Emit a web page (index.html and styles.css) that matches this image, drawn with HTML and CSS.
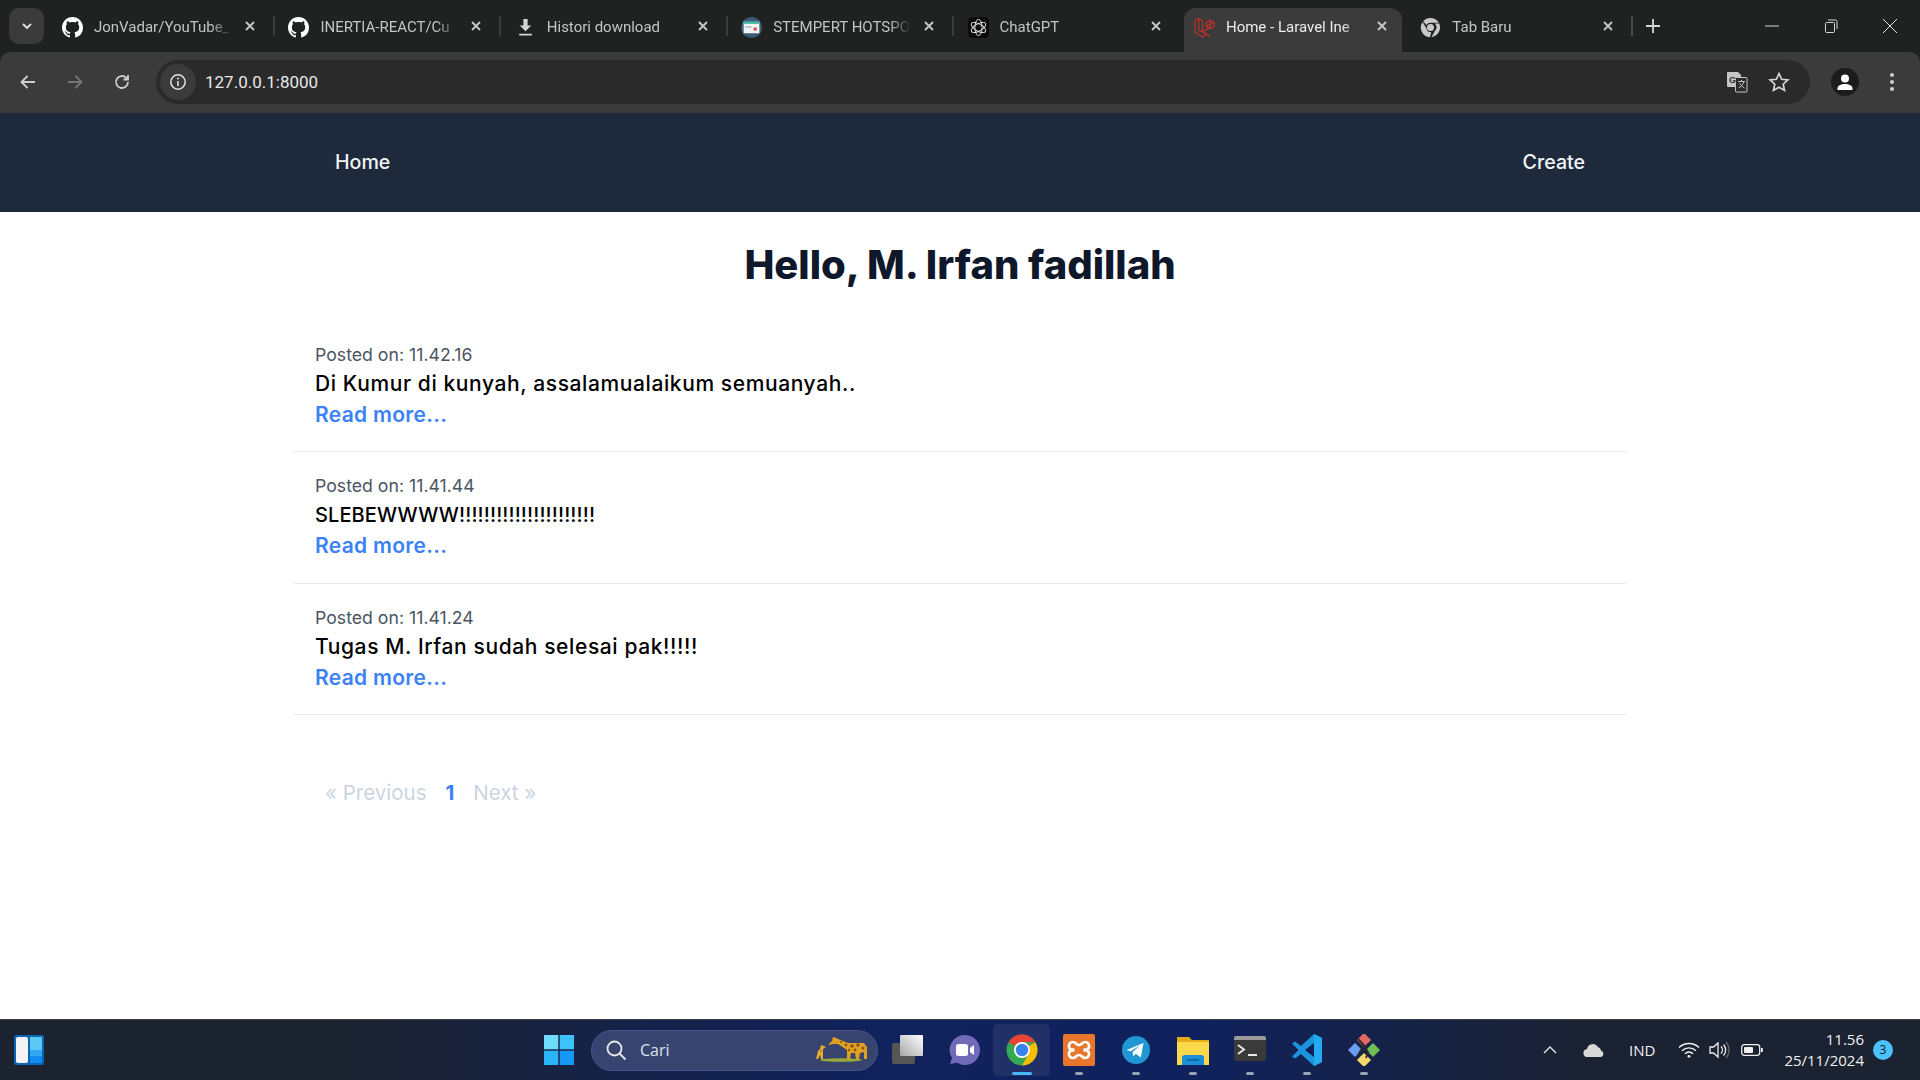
FILE: index.html
```html
<!DOCTYPE html>
<html lang="id">
<head>
    <meta charset="UTF-8">
    <title>Home - Laravel Inertia</title>
    <link rel="stylesheet" href="styles.css">
</head>
<body>
    <svg class="defs" width="0" height="0">
        <symbol id="gh" viewBox="0 0 16 16"><path fill="#fff" d="M8 0C3.58 0 0 3.58 0 8c0 3.54 2.29 6.53 5.47 7.59.4.07.55-.17.55-.38 0-.19-.01-.82-.01-1.49-2.01.37-2.53-.49-2.69-.94-.09-.23-.48-.94-.82-1.13-.28-.15-.68-.52-.01-.53.63-.01 1.08.58 1.23.82.72 1.21 1.87.87 2.33.66.07-.52.28-.87.51-1.07-1.78-.2-3.64-.89-3.64-3.95 0-.87.31-1.59.82-2.15-.08-.2-.36-1.02.08-2.12 0 0 .67-.21 2.2.82.64-.18 1.32-.27 2-.27.68 0 1.36.09 2 .27 1.53-1.04 2.2-.82 2.2-.82.44 1.1.16 1.92.08 2.12.51.56.82 1.27.82 2.15 0 3.07-1.87 3.75-3.65 3.95.29.25.54.73.54 1.48 0 1.07-.01 1.93-.01 2.2 0 .21.15.46.55.38A8.013 8.013 0 0016 8c0-4.42-3.58-8-8-8z"/></symbol>
        <symbol id="x" viewBox="0 0 12 12"><path d="M2 2l8 8M10 2l-8 8" stroke="#c7c7c7" stroke-width="1.9" fill="none"/></symbol>
    </svg>

    <div class="tabstrip">
        <button class="tab-search"><svg width="12" height="12" viewBox="0 0 12 12"><path d="M2 4l4 4 4-4" stroke="#e3e3e3" stroke-width="1.8" fill="none"/></svg></button>
        <div class="tab">
            <svg class="favicon" viewBox="0 0 16 16"><use href="#gh"/></svg>
            <span class="tab-title">JonVadar/YouTube_</span>
            <svg class="tab-close" viewBox="0 0 12 12"><use href="#x"/></svg>
        </div>
        <div class="tab">
            <svg class="favicon" viewBox="0 0 16 16"><use href="#gh"/></svg>
            <span class="tab-title">INERTIA-REACT/Cu</span>
            <svg class="tab-close" viewBox="0 0 12 12"><use href="#x"/></svg>
        </div>
        <div class="tab">
            <svg class="favicon" viewBox="0 0 20 20"><path d="M8 2h4v6h3.5L10 13.5 4.5 8H8zM4 16h12v1.6H4z" fill="#d5d5d5"/></svg>
            <span class="tab-title">Histori download</span>
            <svg class="tab-close" viewBox="0 0 12 12"><use href="#x"/></svg>
        </div>
        <div class="tab">
            <svg class="favicon" viewBox="0 0 20 20">
                <circle cx="10" cy="10" r="10" fill="#3b5a75"/>
                <rect x="2.5" y="4.5" width="15" height="11" fill="#f2f4f4"/>
                <rect x="2.5" y="4.5" width="15" height="2" fill="#35b8a6"/>
                <rect x="12" y="10" width="3" height="3" fill="#d9534f"/>
                <rect x="4" y="9" width="6" height="1" fill="#8a98a5"/>
            </svg>
            <span class="tab-title">STEMPERT HOTSPO</span>
            <svg class="tab-close" viewBox="0 0 12 12"><use href="#x"/></svg>
        </div>
        <div class="tab">
            <svg class="favicon" viewBox="0 0 20 20">
                <rect width="20" height="20" rx="4" fill="#0a0a0a"/>
                <g fill="none" stroke="#e6e6e6" stroke-width="0.9">
                    <ellipse cx="10" cy="10" rx="3.4" ry="7.8"/>
                    <ellipse cx="10" cy="10" rx="3.4" ry="7.8" transform="rotate(60 10 10)"/>
                    <ellipse cx="10" cy="10" rx="3.4" ry="7.8" transform="rotate(120 10 10)"/>
                </g>
            </svg>
            <span class="tab-title">ChatGPT</span>
            <svg class="tab-close" viewBox="0 0 12 12"><use href="#x"/></svg>
        </div>
        <div class="tab tab-active">
            <svg class="favicon" viewBox="0 0 22 22"><path d="M1 4l4-2.5L9 4v11.500l8 4.500M1 4v12l8 4.600 4-2.300M5 1.500v12l4 2 8-4.500V7.500M9 15.500l4-2.300M13 5.500l4-2.500 4 2.500v4.500l-4 2M13 5.500v4.500l4 2.500M17 3v4.500l4-2.200M13 10l4-2.500" fill="none" stroke="#bd3029" stroke-width="1.300"/></svg>
            <span class="tab-title">Home - Laravel Ine</span>
            <svg class="tab-close" viewBox="0 0 12 12"><use href="#x"/></svg>
        </div>
        <div class="tab tab-last">
            <svg class="favicon" viewBox="0 0 24 24">
                <path d="M12 1a11 11 0 0 1 9.530 5.500H12a5.500 5.500 0 0 0-4.760 2.750L3.600 4.900A11 11 0 0 1 12 1z" fill="#c9c9c9"/>
                <path d="M21.900 7.500A11 11 0 0 1 13 23l4-7a5.500 5.500 0 0 0 0-8.500z" fill="#c9c9c9"/>
                <path d="M3 5.700l4.400 7.300a5.500 5.500 0 0 0 5.500 4.400L11.300 23A11 11 0 0 1 3 5.700z" fill="#c9c9c9"/>
                <circle cx="12" cy="12" r="4" fill="#c9c9c9"/>
            </svg>
            <span class="tab-title">Tab Baru</span>
            <svg class="tab-close" viewBox="0 0 12 12"><use href="#x"/></svg>
        </div>
        <svg class="tab-new" viewBox="0 0 14 14"><path d="M7 0v14M0 7h14" stroke="#d5d5d5" stroke-width="1.8"/></svg>
        <div class="win-controls">
            <svg viewBox="0 0 14 14"><path d="M0 7h14" stroke="#d5d5d5" stroke-width="1"/></svg>
            <svg viewBox="0 0 14 14"><path d="M2.500 3.500h7a1 1 0 0 1 1 1v8a1 1 0 0 1-1 1h-7a1 1 0 0 1-1-1v-8a1 1 0 0 1 1-1zM4 1h7.500a1.500 1.500 0 0 1 1.500 1.500V10" stroke="#d5d5d5" fill="none"/></svg>
            <svg viewBox="0 0 14 14"><path d="M0 0l14 14M14 0L0 14" stroke="#e3e3e3" stroke-width="1"/></svg>
        </div>
    </div>

    <div class="toolbar">
        <svg class="tool" viewBox="0 0 20 20"><path d="M17 10H4M9.500 4L3.500 10l6 6" fill="none" stroke="#cfcfcf" stroke-width="1.800"/></svg>
        <svg class="tool" viewBox="0 0 20 20"><path d="M3 10h13M10.500 4l6 6-6 6" fill="none" stroke="#757575" stroke-width="1.800"/></svg>
        <svg class="tool" viewBox="0 0 20 20"><path d="M16 10a6 6 0 1 1-1.800-4.300L16 7.500M16 3v4.500h-4.500" fill="none" stroke="#cfcfcf" stroke-width="1.800"/></svg>
        <div class="omnibox">
            <span class="site-info"><svg width="18" height="18" viewBox="0 0 18 18"><circle cx="9" cy="9" r="7.200" fill="none" stroke="#e3e3e3" stroke-width="1.500"/><path d="M9 8v5" stroke="#e3e3e3" stroke-width="1.600"/><circle cx="9" cy="5.500" r="1" fill="#e3e3e3"/></svg></span>
            <span class="url">127.0.0.1:8000</span>
            <svg class="omni-icon translate" viewBox="0 0 22 22">
                <path d="M2 1h10l3 3v12H2a1 1 0 0 1-1-1V2a1 1 0 0 1 1-1z" fill="#c4c4c4"/>
                <rect x="9.500" y="6.500" width="11.500" height="14.500" rx="1" fill="#2a2a2a" stroke="#c4c4c4"/>
                <text x="3" y="12" class="translate-g">G</text>
                <path d="M12 10.500h7M15.500 9v1.500M18 10.500c-1 3.500-3 5-5.500 6.500M13.500 12c1 2 3 4 5 5" stroke="#c4c4c4" fill="none"/>
            </svg>
            <svg class="omni-icon" viewBox="0 0 22 22"><path d="M11 2.500l2.600 5.800 6.300.7-4.700 4.200 1.300 6.200L11 16.200l-5.500 3.200 1.300-6.200L2.100 9l6.300-.7z" fill="none" stroke="#d5d5d5" stroke-width="1.700"/></svg>
        </div>
        <span class="avatar"><svg width="20" height="20" viewBox="0 0 20 20"><circle cx="10" cy="6.500" r="4" fill="#fff"/><path d="M2.500 18v-1.500c0-3 3.500-4.500 7.500-4.500s7.500 1.500 7.500 4.500V18z" fill="#fff"/></svg></span>
        <svg class="menu-dots" width="6" height="22" viewBox="0 0 6 22"><circle cx="3" cy="4" r="2" fill="#cfcfcf"/><circle cx="3" cy="11" r="2" fill="#cfcfcf"/><circle cx="3" cy="18" r="2" fill="#cfcfcf"/></svg>
    </div>

    <nav class="navbar">
        <a class="nav-link" href="#">Home</a>
        <a class="nav-link" href="#">Create</a>
    </nav>

    <main class="content">
        <h1 class="greeting">Hello, M. Irfan fadillah</h1>
        <div class="posts">
            <div class="post">
                <p class="post-date">Posted on: 11.42.16</p>
                <p class="post-body">Di Kumur di kunyah, assalamualaikum semuanyah..</p>
                <a class="read-more" href="#">Read more...</a>
            </div>
            <div class="post">
                <p class="post-date">Posted on: 11.41.44</p>
                <p class="post-body post-body-caps">SLEBEWWWW!!!!!!!!!!!!!!!!!!!!!!</p>
                <a class="read-more" href="#">Read more...</a>
            </div>
            <div class="post">
                <p class="post-date">Posted on: 11.41.24</p>
                <p class="post-body">Tugas M. Irfan sudah selesai pak!!!!!</p>
                <a class="read-more" href="#">Read more...</a>
            </div>
        </div>
        <div class="pagination">
            <span class="page-off">« Previous</span>
            <span class="page-on">1</span>
            <span class="page-off">Next »</span>
        </div>
    </main>

    <footer class="taskbar">
        <svg class="widgets" viewBox="0 0 30 30">
            <rect width="30" height="30" rx="2" fill="#0c64b4"/>
            <rect x="2" y="2" width="12" height="26" rx="2" fill="#f4f4f4"/>
            <rect x="16" y="2" width="12" height="13" fill="#5cc8f6"/>
            <rect x="16" y="15" width="12" height="6" fill="#30a8f0"/>
            <rect x="16" y="21" width="12" height="7" fill="#0f8cf0"/>
        </svg>
        <div class="task-center">
            <svg class="start" viewBox="0 0 30 30">
                <rect width="14.300" height="14.300" fill="#6fdcfb"/>
                <rect x="15.700" width="14.300" height="14.300" fill="#3dc2fb"/>
                <rect y="15.700" width="14.300" height="14.300" fill="#2cb4fa"/>
                <rect x="15.700" y="15.700" width="14.300" height="14.300" fill="#1699f5"/>
            </svg>
            <div class="search">
                <svg width="22" height="22" viewBox="0 0 22 22"><circle cx="9.500" cy="9.500" r="7" fill="none" stroke="#e8e8e8" stroke-width="1.800"/><path d="M14.500 14.500l6 6" stroke="#e8e8e8" stroke-width="1.800"/></svg>
                <span class="search-label">Cari</span>
                <svg class="giraffe" width="56" height="30" viewBox="0 0 56 30">
                    <ellipse cx="27" cy="25" rx="21" ry="1.700" fill="#9aa83a"/>
                    <path d="M14 10l4-4 1-4 3 1 2 1 10 4h16l3 4v12h-3v-7l-4 1-1 6h-3l-1-6h-4l-1 6h-3v-9l-9-6h-5z" fill="#e0a020"/>
                    <path d="M7 10l3 1 2 1-3 2v10H7l-1-4-2 4H2l2-8 2-2z" fill="#e6ac30"/>
                    <g fill="#8a5412"><circle cx="27" cy="7" r="1"/><circle cx="32" cy="10" r="1.300"/><circle cx="38" cy="11" r="1.700"/><circle cx="44" cy="10" r="1.700"/><circle cx="49" cy="13" r="1.600"/><circle cx="41" cy="15" r="1.400"/><circle cx="35" cy="15" r="1.200"/><circle cx="7" cy="16" r=".8"/></g>
                </svg>
            </div>
            <div class="dock">
                <span class="dock-item">
                    <svg class="app" viewBox="0 0 32 32"><rect x="0" y="9" width="23" height="21" rx="2" fill="#565656"/><rect x="8" y="1" width="23" height="21" rx="1" fill="url(#tv)"/><defs><linearGradient id="tv" x1="0" y1="1" x2="1" y2="0"><stop offset="0" stop-color="#a8a8a8"/><stop offset="1" stop-color="#fff"/></linearGradient></defs></svg>
                </span>
                <span class="dock-item">
                    <svg class="app" viewBox="0 0 32 32"><path d="M16 1a15 15 0 1 1-8 27.700L1 30l2-6A15 15 0 0 1 16 1z" fill="#6f6bb8"/><rect x="7" y="10" width="12" height="12" rx="2.500" fill="#fff"/><path d="M21 14l4-3v10l-4-3z" fill="#fff"/></svg>
                </span>
                <span class="dock-item dock-active">
                    <svg class="app" viewBox="0 0 32 32">
                        <circle cx="16" cy="16" r="15.500" fill="#34a853"/>
                        <path d="M16 .500a15.500 15.500 0 0 1 13.400 7.750H16a7.750 7.750 0 0 0-6.700 3.900L2.600 8.200A15.500 15.500 0 0 1 16 .500z" fill="#ea4335"/>
                        <path d="M29.400 8.250A15.500 15.500 0 0 1 16 31.500l6.700-11.600a7.750 7.750 0 0 0 0-7.700L29.400 8.250z" fill="#fbbc04"/>
                        <circle cx="16" cy="16" r="8" fill="#fff"/>
                        <circle cx="16" cy="16" r="6.200" fill="#3b82ec"/>
                    </svg>
                    <i class="dot dot-on"></i>
                </span>
                <span class="dock-item">
                    <svg class="app" viewBox="0 0 32 32"><rect width="32" height="32" rx="2" fill="#e8762c"/><path d="M10 8a4 4 0 0 0-2 7.500h3.500M22 8a4 4 0 0 1 2 7.500h-3.500M10 8c3 0 3 3 6 3s3-3 6-3M10 24a4 4 0 0 1-2-7.500h3.500M22 24a4 4 0 0 0 2-7.500h-3.500M10 24c3 0 3-3 6-3s3 3 6 3" fill="none" stroke="#fff" stroke-width="2.600"/></svg>
                    <i class="dot"></i>
                </span>
                <span class="dock-item">
                    <svg class="app" viewBox="0 0 32 32"><circle cx="16" cy="16" r="14" fill="#1f97d4"/><path d="M6.500 16l17-7-2.700 14.500-5-3.700-2.600 2.500-.5-4.200 7.500-6.800-9.500 6z" fill="#fff"/></svg>
                    <i class="dot"></i>
                </span>
                <span class="dock-item">
                    <svg class="app" viewBox="0 0 32 32"><path d="M0 3h12l3 3h17v25H0z" fill="#e5ac18"/><rect y="8" width="32" height="23" fill="#fbd84c"/><path d="M5 31v-7a3 3 0 0 1 3-3h16a3 3 0 0 1 3 3v7z" fill="#1b8fd8"/><rect x="10" y="25" width="12" height="1.600" fill="#0e5f9e"/></svg>
                    <i class="dot"></i>
                </span>
                <span class="dock-item">
                    <svg class="app" viewBox="0 0 32 32"><rect y="2" width="32" height="25" rx="2" fill="#3a3a3a"/><path d="M2 2h28a2 2 0 0 1 2 2v2H0V4a2 2 0 0 1 2-2z" fill="#9a9a9a"/><path d="M4 11l6 4.500L4 20" fill="none" stroke="#e6e6e6" stroke-width="2"/><path d="M14 21h9" stroke="#e6e6e6" stroke-width="2"/></svg>
                    <i class="dot"></i>
                </span>
                <span class="dock-item">
                    <svg class="app" viewBox="0 0 32 32"><path d="M23 0l8 4v24l-8 4-13-12-6 4.500-3-2L7.500 16 1 9.500l3-2L10 12z" fill="#1c94dc"/><path d="M23 0l8 4v24l-8 4z" fill="#24aaf0"/><path d="M23 9v14l-9-7z" fill="#0d1f5c"/></svg>
                    <i class="dot"></i>
                </span>
                <span class="dock-item">
                    <svg class="app" viewBox="0 0 32 32">
                        <rect x="11" y="1" width="10" height="10" transform="rotate(45 16 6)" fill="#e46962"/>
                        <rect x="2" y="11" width="10" height="10" transform="rotate(45 7 16)" fill="#6d9ef5"/>
                        <rect x="20" y="11" width="10" height="10" transform="rotate(45 25 16)" fill="#6fbf55"/>
                        <rect x="11" y="21" width="10" height="10" transform="rotate(45 16 26)" fill="#f5d76a"/>
                        <path d="M10 5l6 6 4 7-2 6M16 11l-6 10" stroke="#2b2b2b" stroke-width="1.800" fill="none"/>
                    </svg>
                    <i class="dot"></i>
                </span>
            </div>
        </div>
        <div class="tray">
            <svg class="tray-caret" width="14" height="8" viewBox="0 0 14 8"><path d="M1 7l6-6 6 6" fill="none" stroke="#e8e8e8" stroke-width="1.400"/></svg>
            <svg class="tray-cloud" width="22" height="14" viewBox="0 0 22 14"><path d="M5 14a4 4 0 0 1-1-8 6 6 0 0 1 11-2 4.500 4.500 0 0 1 3 3.500A3.400 3.400 0 0 1 18 14z" fill="#d8d8d8"/></svg>
            <span class="tray-lang">IND</span>
            <svg class="tray-wifi" width="22" height="16" viewBox="0 0 22 16"><path d="M1 5.500a14.500 14.500 0 0 1 20 0M4 8.700a10 10 0 0 1 14 0M7 11.700a5.500 5.500 0 0 1 8 0" fill="none" stroke="#eee" stroke-width="1.400"/><circle cx="11" cy="14.300" r="1.400" fill="#eee"/></svg>
            <svg class="tray-vol" width="22" height="18" viewBox="0 0 22 18"><path d="M1 6h3.500L9 2v14l-4.500-4H1z" fill="none" stroke="#eee" stroke-width="1.300"/><path d="M12 5.500a5 5 0 0 1 0 7M14.500 3.500a8 8 0 0 1 0 11" fill="none" stroke="#eee" stroke-width="1.300"/><path d="M17 1a12 12 0 0 1 0 16" fill="none" stroke="#666" stroke-width="1.200"/></svg>
            <svg class="tray-batt" width="22" height="12" viewBox="0 0 22 12"><rect x=".7" y=".7" width="18" height="10.600" rx="2.500" fill="none" stroke="#eee" stroke-width="1.300"/><rect x="3" y="3" width="9" height="6" rx="1" fill="#eee"/><rect x="20" y="4" width="1.800" height="4" fill="#eee"/></svg>
            <div class="clock"><span>11.56</span><span>25/11/2024</span></div>
            <span class="notif">3</span>
        </div>
    </footer>
</body>
</html>
```

FILE: styles.css
```css
* {
    box-sizing: border-box;
}
body {
    margin: 0;
    height: 1080px;
    overflow: hidden;
    display: flex;
    flex-direction: column;
    background: #202222;
    font-family: 'Inter', sans-serif;
}
.defs {
    position: absolute;
}

/* browser chrome */
.tabstrip {
    height: 52px;
    flex: none;
    display: flex;
    align-items: flex-start;
    background: #202222;
    padding-left: 9px;
    font-family: 'Roboto', sans-serif;
}
.tab-search {
    width: 35px;
    height: 36px;
    margin: 8px 8px 0 0;
    border: none;
    border-radius: 10px;
    background: #3b3b3b;
    display: flex;
    align-items: center;
    justify-content: center;
    padding: 0;
}
.tab {
    width: 226.4px;
    height: 44px;
    margin-top: 8px;
    padding: 0 10px;
    flex: none;
    display: flex;
    align-items: center;
    position: relative;
    color: #c4c4c4;
    font-size: 15px;
}
.tab::after {
    content: "";
    position: absolute;
    left: 221px;
    top: 8px;
    width: 2px;
    height: 20px;
    background: #3a3c3c;
}
.tab:nth-of-type(5)::after,
.tab:nth-of-type(6)::after,
.tab-active::after {
    display: none;
}
.tab-active {
    width: 218px;
    margin-right: 8.4px;
    background: #3b3b3b;
    border-radius: 12px 12px 0 0;
    color: #ececec;
}
.tab-last::after {
    background: #4a4a4a;
}
.favicon {
    width: 21px;
    height: 21px;
    flex: none;
    margin: -6px 11px 0 0;
}
.tab-title {
    width: 138px;
    flex: none;
    margin-top: -6px;
    white-space: nowrap;
    overflow: hidden;
    -webkit-mask-image: linear-gradient(90deg, #000 84%, transparent);
    mask-image: linear-gradient(90deg, #000 84%, transparent);
}
.tab-close {
    width: 12px;
    height: 12px;
    flex: none;
    margin: -8px 0 0 12px;
}
.tab-new {
    width: 14px;
    height: 14px;
    flex: none;
    margin: 19px 0 0 9px;
}
.win-controls {
    margin-left: auto;
    display: flex;
    gap: 45px;
    padding: 19px 23px 0 0;
}
.win-controls svg {
    width: 14px;
    height: 14px;
}

.toolbar {
    height: 61px;
    flex: none;
    background: #3b3b3b;
    border-radius: 10px 10px 0 0;
    display: flex;
    align-items: center;
    padding: 8px 18px 9px 18px;
}
.tool {
    width: 20px;
    height: 20px;
    flex: none;
    margin-right: 27px;
}
.tool:nth-of-type(3) {
    margin-right: 24px;
}
.omnibox {
    width: 1654px;
    height: 44px;
    flex: none;
    background: #2a2a2a;
    border-radius: 22px;
    display: flex;
    align-items: center;
    padding: 0 20px 0 4px;
    color: #e8e8e8;
}
.site-info {
    width: 36px;
    height: 36px;
    border-radius: 50%;
    background: #3b3b3b;
    display: flex;
    align-items: center;
    justify-content: center;
}
.url {
    margin-left: 9px;
    font-family: 'Roboto', sans-serif;
    font-size: 17px;
    flex: 1;
}
.omni-icon {
    width: 22px;
    height: 22px;
    margin-left: 20px;
}
.translate-g {
    font-family: 'Liberation Sans', sans-serif;
    font-size: 9px;
    font-weight: bold;
    fill: #333;
}
.avatar {
    width: 28px;
    height: 28px;
    margin-left: 21px;
    border-radius: 50%;
    background: #1c1c1c;
    display: flex;
    align-items: center;
    justify-content: center;
}
.menu-dots {
    margin-left: 30px;
}

/* page */
.navbar {
    height: 99px;
    flex: none;
    background: #1e293b;
    box-shadow: 0 1px 3px rgba(0, 0, 0, 0.15);
    display: flex;
    align-items: center;
    justify-content: space-between;
    padding: 0 335px 2px 335px;
}
.nav-link {
    color: #f1f5f9;
    font-size: 19.6px;
    font-weight: 500;
    text-decoration: none;
}
.content {
    flex: 1;
    padding: 0 294px;
    background: #fff;
}
.greeting {
    margin: 28px 0 31px;
    height: 50px;
    line-height: 50px;
    text-align: center;
    font-size: 40px;
    font-weight: 800;
    color: #0f172a;
}
.post {
    height: 131.3px;
    padding: 20px 21px 0;
    border-bottom: 1px solid #e5e7eb;
}
.post-date {
    margin: 0;
    height: 28px;
    line-height: 28px;
    font-size: 17.7px;
    color: #4b5563;
}
.post-body {
    margin: 1px 0 0;
    height: 28px;
    line-height: 28px;
    font-size: 21px;
    font-weight: 500;
    letter-spacing: 0.6px;
    color: #000;
}
.post-body-caps {
    font-size: 20px;
    letter-spacing: 0.1px;
}
.read-more {
    display: block;
    margin-top: 2px;
    line-height: 30px;
    font-size: 21px;
    font-weight: 600;
    letter-spacing: 0.3px;
    color: #3b82f6;
    text-decoration: none;
}
.pagination {
    margin-top: 63px;
    padding-left: 31px;
    display: flex;
    gap: 19px;
    line-height: 30px;
    font-size: 20.5px;
}
.page-off {
    color: #cbd5e1;
}
.page-on {
    color: #3b82f6;
    font-weight: 700;
}

/* windows taskbar */
.taskbar {
    height: 61px;
    flex: none;
    display: flex;
    align-items: center;
    position: relative;
    padding: 0 0 0 14px;
    background: linear-gradient(90deg, #1b2230 0, #1c2331 18%, #11225c 45%, #10225e 62%, #1a2233 82%, #1b2230 100%);
    border-top: 1px solid #3a3f47;
}
.widgets {
    width: 30px;
    height: 30px;
    flex: none;
}
.task-center {
    margin-left: 500px;
    display: flex;
    align-items: center;
}
.start {
    width: 30px;
    height: 30px;
    flex: none;
}
.search {
    width: 287px;
    height: 41px;
    margin-left: 17px;
    padding: 0 7px 0 13px;
    border-radius: 21px;
    background: #374470;
    border: 1px solid #47548a;
    display: flex;
    align-items: center;
    color: #dfe3ea;
    font-size: 16px;
    font-family: 'Open Sans', sans-serif;
}
.search-label {
    margin-left: 13px;
    flex: 1;
}
.dock {
    display: flex;
    margin-left: 1px;
}
.dock-item {
    width: 57px;
    height: 52px;
    flex: none;
    display: flex;
    align-items: center;
    justify-content: center;
    position: relative;
    border-radius: 5px;
}
.dock-active {
    background: rgba(255, 255, 255, 0.07);
}
.app {
    width: 32px;
    height: 32px;
}
.dot {
    position: absolute;
    bottom: 1px;
    left: 50%;
    width: 8px;
    height: 3px;
    margin-left: -4px;
    border-radius: 2px;
    background: #9ba3b4;
}
.dot-on {
    width: 20px;
    margin-left: -10px;
    background: #47b8f5;
}
.tray {
    margin-left: auto;
    display: flex;
    align-items: center;
    padding-right: 27px;
    color: #f0f0f0;
    font-family: 'Open Sans', sans-serif;
    font-size: 15px;
}
.tray-lang {
    margin-left: 24px;
}
.tray-cloud {
    margin-left: 26px;
}
.tray-wifi {
    margin-left: 23px;
}
.tray-vol {
    margin-left: 9px;
}
.tray-batt {
    margin-left: 10px;
}
.clock {
    margin-left: 21px;
    display: flex;
    flex-direction: column;
    align-items: flex-end;
    line-height: 21px;
}
.notif {
    width: 20px;
    height: 20px;
    margin-left: 9px;
    border-radius: 50%;
    background: #4cc2ff;
    color: #0c1a2a;
    font-size: 12px;
    line-height: 20px;
    text-align: center;
}
```
